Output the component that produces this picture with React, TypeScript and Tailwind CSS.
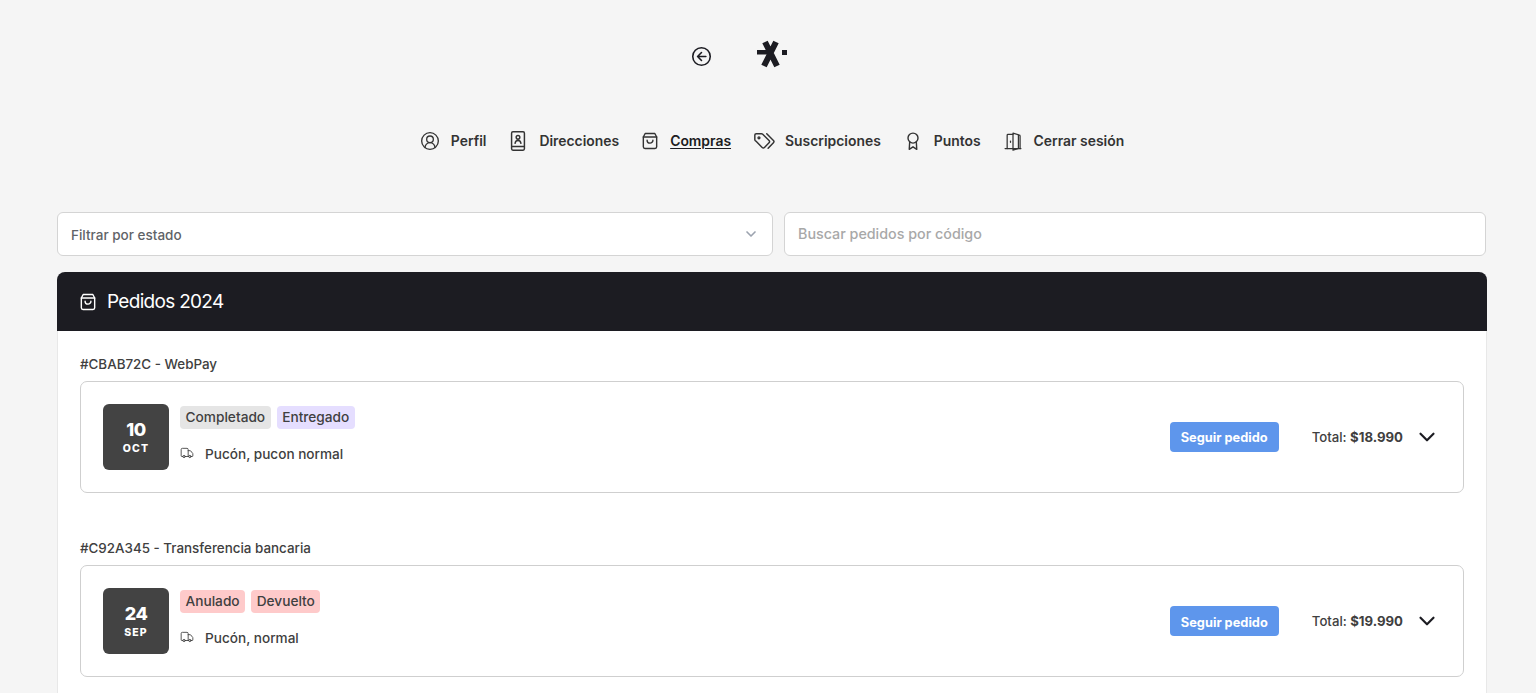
import { ChevronDown, CircleUserRound, Truck } from 'lucide-react';

const BagIcon = ({ className }: { className?: string }) => (
  <svg viewBox="0 0 24 24" fill="none" stroke="currentColor" strokeWidth="1.7" strokeLinecap="round" strokeLinejoin="round" className={className}>
    <path d="M6.2 3h11.600l2.200 4.200V19a2 2 0 0 1-2 2H6a2 2 0 0 1-2-2V7.200L6.200 3z" />
    <path d="M4 7.200h16" />
    <path d="M8.500 11a3.500 3.500 0 0 0 7 0" />
  </svg>
);

const BookIcon = ({ className }: { className?: string }) => (
  <svg viewBox="0 0 24 24" fill="none" stroke="currentColor" strokeWidth="1.600" strokeLinecap="round" strokeLinejoin="round" className={className}>
    <path d="M5 18V3.500A1.500 1.500 0 0 1 6.500 2h11A1.500 1.500 0 0 1 19 3.500v17a1.500 1.500 0 0 1-1.500 1.500h-11A1.500 1.500 0 0 1 5 20.500V18h14" />
    <circle cx="12" cy="8" r="2" />
    <path d="M8.800 14.500c.3-2 1.600-3 3.200-3s2.900 1 3.200 3" />
  </svg>
);

const TagsIcon = ({ className }: { className?: string }) => (
  <svg viewBox="0 0 24 24" fill="none" stroke="currentColor" strokeWidth="1.600" strokeLinecap="round" strokeLinejoin="round" className={className}>
    <path d="M2 5.500A1.500 1.500 0 0 1 3.500 4h5.700a2 2 0 0 1 1.400.6l6.900 6.900a1.800 1.800 0 0 1 0 2.500l-5 5a1.800 1.800 0 0 1-2.500 0l-6.900-6.900A2 2 0 0 1 2 10.700z" />
    <circle cx="6.500" cy="8.500" r="1" />
    <path d="M15 4l7.300 7.400a1.800 1.800 0 0 1 0 2.500L16.500 20" />
  </svg>
);

const RibbonIcon = ({ className }: { className?: string }) => (
  <svg viewBox="0 0 24 24" fill="none" stroke="currentColor" strokeWidth="1.700" strokeLinecap="round" strokeLinejoin="round" className={className}>
    <circle cx="12" cy="8.500" r="6" />
    <path d="M8 13.500 7.500 22l4.500-3 4.500 3-.5-8.500" />
  </svg>
);

const DoorIcon = ({ className }: { className?: string }) => (
  <svg viewBox="0 0 24 24" fill="none" stroke="currentColor" strokeWidth="1.500" strokeLinecap="round" strokeLinejoin="round" className={className}>
    <path d="M2.500 21h19" />
    <path d="M5 21V5a1 1 0 0 1 1-1h6" />
    <path d="M12 2.500V23l6.500-2V4.500z" />
    <path d="M18.500 5h1a1 1 0 0 1 1 1v15" />
    <path d="M9 12v1.500" />
  </svg>
);

const navItems = [
  { label: 'Perfil', icon: <CircleUserRound className="w-[20px] h-[20px]" strokeWidth={1.6} />, gap: 'gap-[11px]', ml: '' },
  { label: 'Direcciones', icon: <BookIcon className="w-[22px] h-[22px]" />, gap: 'gap-[10px]', ml: '' },
  { label: 'Compras', icon: <BagIcon className="w-[20px] h-[20px]" />, gap: 'gap-[10px]', ml: '', active: true },
  { label: 'Suscripciones', icon: <TagsIcon className="w-[22px] h-[22px]" />, gap: 'gap-[10px]', ml: 'ml-[1px]' },
  { label: 'Puntos', icon: <RibbonIcon className="w-[20px] h-[20px]" />, gap: 'gap-[11px]', ml: 'ml-[1px]' },
  { label: 'Cerrar sesión', icon: <DoorIcon className="w-[20px] h-[20px]" />, gap: 'gap-[11px]', ml: 'ml-[1px]' },
];

interface Order {
  title: string;
  day: string;
  month: string;
  badges: { label: string; color: string }[];
  address: string;
  total: string;
}

const orders: Order[] = [
  {
    title: '#CBAB72C - WebPay',
    day: '10',
    month: 'OCT',
    badges: [
      { label: 'Completado', color: 'bg-[#e5e5e5]' },
      { label: 'Entregado', color: 'bg-[#e5deff]' },
    ],
    address: 'Pucón, pucon normal',
    total: '$18.990',
  },
  {
    title: '#C92A345 - Transferencia bancaria',
    day: '24',
    month: 'SEP',
    badges: [
      { label: 'Anulado', color: 'bg-[#fecaca]' },
      { label: 'Devuelto', color: 'bg-[#fecaca]' },
    ],
    address: 'Pucón, normal',
    total: '$19.990',
  },
];

const OrderRow = ({ order }: { order: Order }) => (
  <div className="mb-[46.4px]">
    <div className="text-[13.4px] leading-[18px] font-medium text-[#404040] mb-[8px]">{order.title}</div>
    <div className="h-[112px] border border-[#cfcfcf] rounded-[7px] pl-[22px] pr-[23px] flex items-center bg-white">
      <div className="w-[66px] h-[66px] rounded-[6px] bg-[#434343] text-white flex flex-col items-center justify-center pt-[2px]">
        <span className="text-[18px] leading-[20px] font-extrabold tracking-[-0.5px]">{order.day}</span>
        <span className="mt-[2px] text-[10.5px] leading-[14px] font-extrabold tracking-[1.1px]">{order.month}</span>
      </div>
      <div className="ml-[11px] flex flex-col self-start mt-[24px]">
        <div className="flex gap-[6px]">
          {order.badges.map((badge) => (
            <span key={badge.label} className={`h-[23px] px-[5.5px] rounded-[4px] text-[13.7px] leading-[22px] font-medium text-[#404040] ${badge.color}`}>
              {badge.label}
            </span>
          ))}
        </div>
        <div className="flex items-center mt-[15px] text-[13.6px] leading-[20px] font-medium text-[#404040]">
          <Truck className="w-[14px] h-[14px] mr-[11px] -translate-y-[1px]" strokeWidth={1.5} />
          {order.address}
        </div>
      </div>
      <button className="ml-auto h-[30px] w-[109px] pt-[1.6px] rounded-[4px] bg-[#5e96ec] text-white text-[12.8px] font-bold">
        Seguir pedido
      </button>
      <div className="ml-[33px] pt-[1.6px] text-[13.2px] font-medium text-[#404040] whitespace-nowrap">
        Total: <span className="font-bold">{order.total}</span>
      </div>
      <ChevronDown className="ml-[11px] w-[26px] h-[26px] text-[#1c1c22]" strokeWidth={2} />
    </div>
  </div>
);

export default function App() {
  return (
    <div className="h-screen overflow-hidden bg-[#f5f5f5] font-['Inter',sans-serif] pl-[57px] pr-[49px]">
      <div className="flex justify-center pt-[36px] h-[125px]">
        <div className="flex w-[160px] items-start">
          <svg viewBox="0 0 24 24" fill="none" stroke="#1c1c22" strokeWidth="1.800" strokeLinecap="round" strokeLinejoin="round" className="w-[21px] h-[21px] mt-[10px] -ml-[1px] shrink-0">
            <circle cx="12" cy="12" r="10" />
            <path d="M12 7.500 7.500 12l4.500 4.500M7.500 12H17" />
          </svg>
          <svg viewBox="0 0 30 30" className="ml-[45px] mt-[3px] w-[30px] h-[30px] shrink-0 blur-[0.6px]" stroke="#1c1c22" fill="#1c1c22">
            <path d="M8 3 20 27M19 3 7 27" strokeWidth="6" fill="none" />
            <rect x="0" y="11" width="11" height="4.500" stroke="none" />
            <rect x="25" y="11" width="5" height="5" stroke="none" />
          </svg>
        </div>
      </div>

      <nav className="flex justify-center items-center gap-[21px] h-[32px] text-[#333333]">
        {navItems.map((item) => (
          <a key={item.label} className={`flex items-center ${item.gap} ${item.ml} text-[13.9px] font-semibold`}>
            {item.icon}
            <span className={item.active ? 'underline underline-offset-2 text-[#1c1c22]' : ''}>{item.label}</span>
          </a>
        ))}
      </nav>

      <div className="flex gap-[11px] mt-[55px] pr-[1px]">
        <div className="w-[716px] h-[44px] bg-white border border-[#d4d4d4] rounded-[6px] flex items-center justify-between pl-[13px] pr-[13px] pt-[2px] text-[13.5px] font-medium text-[#5f6368]">
          Filtrar por estado
          <ChevronDown className="w-[16px] h-[16px] text-[#9ca3af] -translate-y-[1px]" strokeWidth={2.5} />
        </div>
        <input
          placeholder="Buscar pedidos por código"
          className="flex-1 h-[44px] bg-white border border-[#d4d4d4] rounded-[6px] px-[13px] pb-[2px] text-[14.3px] font-medium placeholder:text-[#a8a8a8]"
        />
      </div>

      <div className="mt-[16px] bg-white rounded-t-[8px] h-[500px] border-x border-[#e8e8e8]">
        <div className="-mx-px h-[59px] bg-[#1c1c22] rounded-t-[8px] text-white flex items-center pl-[21px]">
          <BagIcon className="w-[20px] h-[20px]" />
          <span className="ml-[9px] pt-[1px] text-[19px] tracking-[-0.7px]">Pedidos 2024</span>
        </div>
        <div className="pt-[24px] pl-[22px] pr-[22px]">
          {orders.map((order) => (
            <OrderRow key={order.title} order={order} />
          ))}
        </div>
      </div>
    </div>
  );
}
